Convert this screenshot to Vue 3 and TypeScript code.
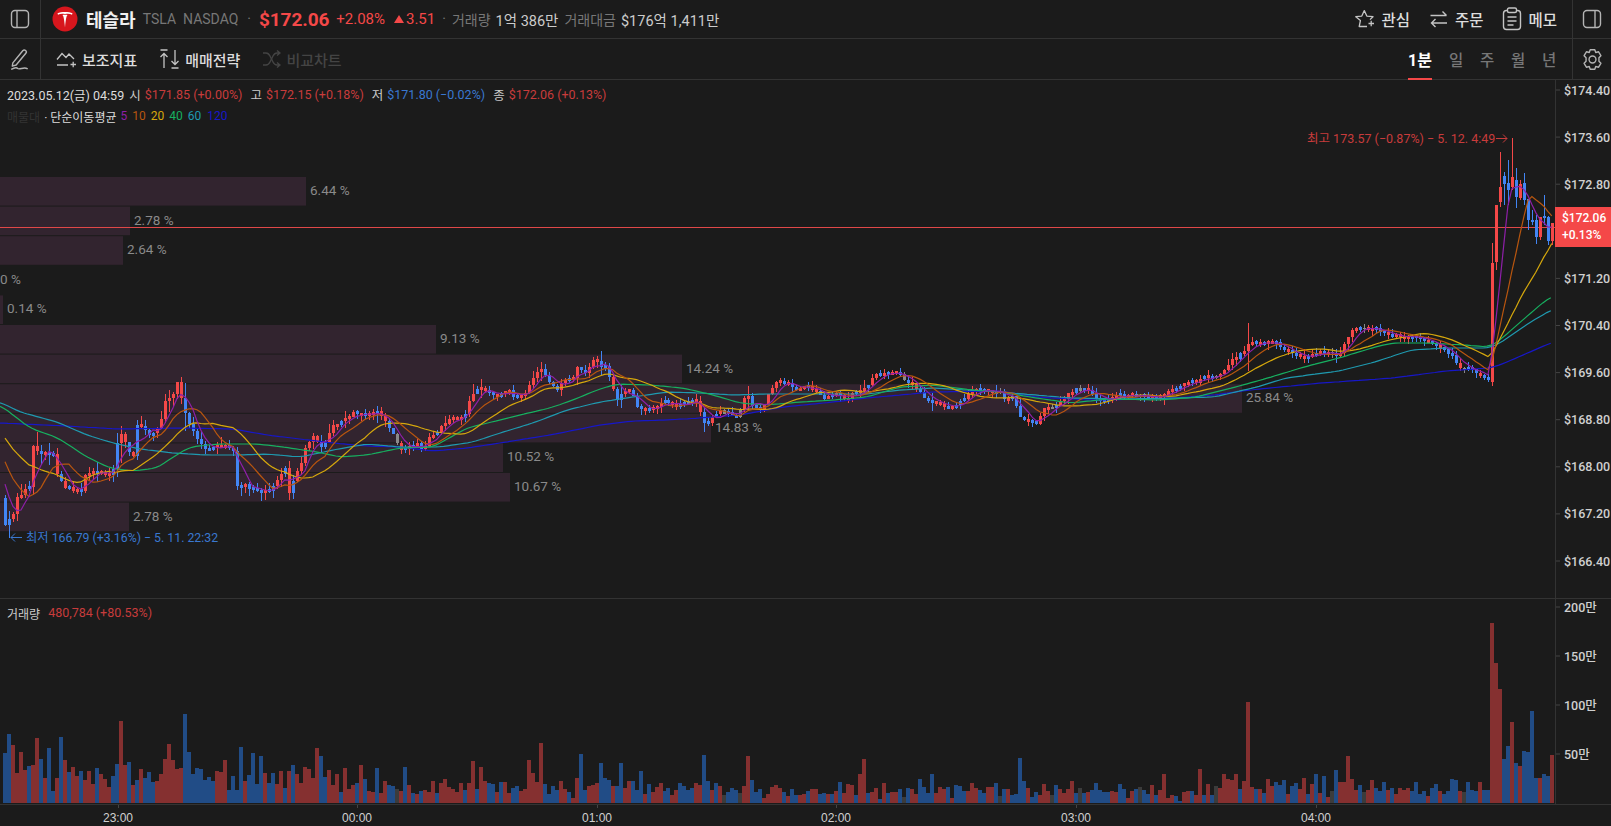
<script setup lang="ts">
import { computed } from 'vue'

type Pt = [number, number]

// 분봉 거래량: 방향(r/b/g) + 막대 높이(px)
const volumeRaw = `
b50 b69 r58 r30 r51 r33 b37 r38 r65 b44 r25 b55 b12 r25 b66 r43 b31 r36 r27 b32 r23 r32 r19 b35 r29 r24 r16 b27 b39 r82
r38 b41 r18 b23 r34 b25 b31 b21 r22 r29 r44 r59 r43 r34 r35 b89 b51 b29 b35 b34 b23 b26 b22 r32 r31 r43 b13 b27 b13 b56
r22 b28 b50 b19 b47 r30 b20 b30 r19 r32 b15 r32 b38 r29 r20 r36 r34 r25 r55 b47 b26 r33 r18 r29 b11 r35 r14 r18 b20 r38
b24 r12 r11 b35 r10 r22 b18 b17 g14 r12 b36 r18 b10 r9 b12 r13 r11 r22 b10 r20 r24 r16 r14 r11 r20 b13 r20 r42 b14 r36
r22 b20 b19 r11 b21 r21 r10 b15 b17 r12 r14 r43 r30 r21 r60
b19 b9 b17 b13 r22 r14 b11 r5 r25 b49 b13 r17 r18 r20 b40 b25 b23 r17 b17 b40 r15 r22 b22 b13 b32 r9 b19 r11 r16 r20
b12 b15 r8 r13 b20 b17 b13 b15 r20 r18 b48 b22 r13 b20 r17 g8 b11 b15 b13 g10 r17 r47 b23 b11 b14 r5 r9 r16 r18 r15
b11 r7 b14 b8 r8 r9 b12 r14 r14 b9 b10 r9 b9 r12 b21 r10 r19 r18 b8 r29 r44 b10 r11 r15 b4 r20 b10 r11 r11 b14 g6 b15
r14 r9 b24 b16 b10 b29 r10 r16 r14 b16 r5 b18 b17 b12 r12 r20 r15 b13 b10 r16 r16 b20 g7 b14 r14 b8 b9 b45 b22 r15 b6
b11 r8 r19 r12 g8 b18 r14 r10 r14 r22 b10
g15 b10 r11 b13 b20 b13 b11 b11 r12 r11 b19 b14 r5 r12 b14 g16 b13 b9 r18 b8 r13 r29 r5 r8 b7 b2 r11 r12 b12 r8 r34 b8
r19 b8 g17 r15 r29 r24 r23 r29 b14 r22 r101 r16 b14 r14 b10 r24 r17 b21 b18 b23 r9 b17 b20 r14 r25 b9 r19 b29 r10 b27
r6 g12 b33 r21 r21 r47 r24 r13 b18 g11 r13 r23 b15 b12 b21 r13 b15 r9 r15 r13 r15 b12 b21 b9 b12 r7 b15 b19 r12 b9 b12
b24 b23 r12 g11 b21 b13 b12 r21 b13 b13 r180 r140 r114 b44 b57 r81 b40 r37 b52 b51 b92 b25 r25 b29 b27 r48
`

const pitch = 3.997
const volumes = volumeRaw.trim().split(/\s+/).map(s => ({ dir: s[0], h: Number(s.slice(1)) }))
const count = volumes.length
const xOf = (k: number) => 1 + pitch * (k + 389 - count)

// 종가 궤적 (화면 좌표)
const closePath: Pt[] = [
  [-90, 398], [-40, 420], [-18, 445], [-4, 470], [0, 490], [5, 525], [13, 515], [17, 497], [24, 490], [30, 488], [33, 447], [37, 452],
  [45, 453], [53, 455], [57, 475], [65, 487], [73, 490], [81, 490], [85, 475], [93, 473], [110, 473], [113, 470], [117, 443],
  [122, 433], [126, 445], [133, 457], [137, 423], [142, 426], [150, 435], [160, 423], [165, 400], [170, 398], [177, 383],
  [182, 400], [186, 418], [193, 430], [200, 443], [207, 450], [217, 447], [225, 445], [230, 448], [234, 450], [237, 490],
  [242, 483], [250, 488], [257, 492], [270, 490], [278, 478], [285, 468], [289, 495], [293, 480], [302, 460], [305, 447],
  [313, 435], [322, 448], [333, 425], [338, 425], [345, 418], [353, 413], [362, 415], [377, 413], [385, 423], [390, 430],
  [402, 450], [407, 448], [417, 445], [422, 448], [430, 437], [433, 435], [442, 425], [450, 417], [462, 418], [466, 412],
  [470, 398], [477, 390], [482, 387], [490, 393], [498, 395], [508, 390], [513, 398], [525, 393], [530, 383], [537, 370],
  [542, 370], [550, 383], [553, 388], [558, 390], [562, 380], [572, 378], [577, 367], [585, 373], [590, 365], [594, 358],
  [598, 363], [605, 368], [610, 383], [617, 400], [623, 390], [630, 388], [637, 408], [645, 411], [653, 410], [663, 402],
  [677, 405], [683, 405], [698, 398], [702, 420], [709, 423], [717, 412], [727, 412], [738, 417], [742, 405], [747, 393],
  [753, 407], [762, 410], [770, 392], [777, 383], [788, 382], [797, 392], [808, 387], [817, 390], [822, 398], [833, 393],
  [840, 395], [847, 403], [852, 395], [860, 392], [868, 385], [877, 373], [883, 373], [897, 372], [908, 382], [913, 382],
  [920, 392], [928, 400], [940, 403], [950, 408], [955, 405], [973, 390], [1000, 393], [1005, 398], [1014, 398], [1020, 417],
  [1027, 423], [1036, 423], [1041, 415], [1045, 407], [1057, 407], [1061, 400], [1071, 392], [1077, 388], [1087, 392],
  [1093, 392], [1096, 398], [1104, 400], [1112, 398], [1118, 395], [1123, 397], [1132, 395], [1141, 397], [1145, 397],
  [1152, 398], [1161, 397], [1171, 390], [1184, 385], [1193, 382], [1205, 378], [1214, 377], [1223, 372], [1232, 360],
  [1243, 353], [1250, 343], [1261, 345], [1273, 342], [1282, 348], [1291, 353], [1302, 358], [1314, 353], [1323, 352],
  [1334, 353], [1339, 357], [1344, 345], [1352, 332], [1357, 325], [1364, 330], [1373, 328], [1382, 330], [1389, 335],
  [1404, 337], [1416, 338], [1425, 342], [1434, 345], [1443, 350], [1454, 358], [1461, 368], [1471, 370], [1480, 377],
  [1489, 380],
]

// 급등 구간은 값을 직접 지정 [open, close, high, low]
const spike: number[][] = [
  [382, 263, 243, 386], [262, 205, 205, 270], [202, 187, 152, 207], [176, 184, 172, 205], [183, 190, 160, 205],
  [187, 177, 138, 190], [180, 197, 168, 208], [198, 184, 180, 200], [183, 200, 173, 205], [199, 220, 199, 230],
  [220, 222, 210, 225], [220, 237, 215, 244], [237, 217, 217, 240], [216, 218, 195, 225], [217, 241, 216, 245],
  [241, 223, 223, 245],
]

const ma40: Pt[] = [
  [0, 405], [30, 428], [58, 438], [87, 457], [110, 468], [133, 471], [157, 468], [173, 457], [190, 447], [217, 444], [257, 444],
  [283, 447], [317, 452], [340, 457], [367, 455], [400, 448], [433, 447], [467, 428], [500, 420], [520, 415], [550, 408],
  [573, 400], [597, 390], [617, 384], [650, 385], [683, 388], [713, 395], [740, 403], [767, 405], [800, 402], [833, 400],
  [867, 397], [900, 387], [933, 385], [973, 390], [1000, 392], [1036, 398], [1071, 403], [1107, 399], [1161, 400], [1196, 397],
  [1232, 388], [1268, 378], [1304, 367], [1339, 358], [1375, 347], [1393, 343], [1429, 343], [1464, 345], [1489, 347],
  [1500, 340], [1525, 318], [1546, 300], [1553, 296],
]
const ma60: Pt[] = [
  [0, 402], [20, 412], [57, 422], [87, 435], [113, 443], [140, 449], [173, 453], [207, 455], [240, 455], [267, 454], [300, 457],
  [333, 450], [367, 444], [400, 447], [440, 447], [473, 442], [500, 433], [533, 423], [567, 410], [600, 402], [633, 397],
  [667, 392], [700, 393], [733, 395], [767, 394], [867, 394], [900, 390], [933, 388], [967, 390], [1000, 392], [1036, 395],
  [1071, 398], [1125, 399], [1179, 398], [1214, 397], [1257, 387], [1286, 378], [1339, 371], [1375, 362], [1411, 350],
  [1446, 348], [1489, 348], [1500, 343], [1529, 323], [1553, 309],
]
const ma120: Pt[] = [
  [0, 423], [67, 426], [117, 429], [183, 428], [233, 429], [267, 435], [300, 439], [333, 443], [367, 446], [400, 447], [433, 451],
  [467, 448], [500, 443], [550, 435], [600, 425], [633, 421], [667, 420], [700, 418], [740, 415], [783, 407], [833, 402],
  [867, 398], [900, 395], [933, 392], [1000, 391], [1036, 397], [1089, 400], [1161, 399], [1214, 395], [1250, 390], [1321, 383],
  [1393, 378], [1446, 371], [1489, 368], [1500, 365], [1553, 342],
]

function lerp(pts: Pt[], x: number) {
  if (x <= pts[0][0]) return pts[0][1]
  for (let i = 1; i < pts.length; i++) {
    if (x <= pts[i][0]) {
      const [x0, y0] = pts[i - 1]
      const [x1, y1] = pts[i]
      return y0 + ((y1 - y0) * (x - x0)) / (x1 - x0)
    }
  }
  return pts[pts.length - 1][1]
}

let seed = 20230512
function rand() {
  seed = (seed * 1664525 + 1013904223) % 4294967296
  return seed / 4294967296
}

const spikeStart = count - spike.length

const closes = new Map<number, number>()
for (let k = -130; k < count; k++) {
  if (k >= spikeStart) closes.set(k, spike[k - spikeStart][1])
  else closes.set(k, lerp(closePath, xOf(k)) + (rand() - 0.5) * 4)
}

const candles = volumes.map((v, k) => {
  if (k >= spikeStart) {
    const [o, c, h, l] = spike[k - spikeStart]
    return { x: Math.round(xOf(k)), top: Math.min(o, c), bottom: Math.max(o, c), h, l, dir: v.dir }
  }
  const c = closes.get(k) as number
  const o = closes.get(k - 1) as number
  let top = Math.min(o, c)
  let bottom = Math.max(o, c)
  const minBody = v.dir === 'g' ? 1 : 3
  if (bottom - top < minBody) {
    const pad = (minBody - (bottom - top)) / 2
    top -= pad
    bottom += pad
  }
  const reach = 2 + v.h * 0.22
  return { x: Math.round(xOf(k)), top, bottom, h: top - rand() * reach, l: bottom + rand() * reach, dir: v.dir }
})

function candlePath(dir: string) {
  return candles
    .filter(c => c.dir === dir)
    .map(c => {
      const wick = `M${c.x} ${c.h.toFixed(1)}h1V${c.l.toFixed(1)}h-1z`
      const body = `M${c.x - 1} ${c.top.toFixed(1)}h3V${c.bottom.toFixed(1)}h-3z`
      return wick + body
    })
    .join('')
}

function volumePath(dir: string) {
  return volumes
    .map((v, k) => ({ v, k }))
    .filter(({ v }) => v.dir === dir)
    .map(({ v, k }) => `M${Math.round(xOf(k)) - 2} ${803 - v.h}h4V803h-4z`)
    .join('')
}

function movingAverage(n: number) {
  return volumes
    .map((_, k) => {
      let sum = 0
      for (let i = 0; i < n; i++) sum += closes.get(k - i) as number
      return `${xOf(k).toFixed(1)},${(sum / n).toFixed(1)}`
    })
    .join(' ')
}

function smoothLine(pts: Pt[]) {
  const last = pts[pts.length - 1][0]
  const out: string[] = []
  for (let x = pts[0][0]; x <= last; x += pitch) {
    const y = (lerp(pts, x - 6) + lerp(pts, x - 3) + lerp(pts, x) + lerp(pts, x + 3) + lerp(pts, x + 6)) / 5
    out.push(`${x.toFixed(1)},${y.toFixed(1)}`)
  }
  return out.join(' ')
}

const maLines = computed(() => [
  { key: 'ma120', color: '#1717c8', points: smoothLine(ma120) },
  { key: 'ma60', color: '#1f9ab0', points: smoothLine(ma60) },
  { key: 'ma40', color: '#17b060', points: smoothLine(ma40) },
  { key: 'ma20', color: '#d6a80c', points: movingAverage(20) },
  { key: 'ma10', color: '#b8560f', points: movingAverage(10) },
  { key: 'ma5', color: '#8e1fa8', points: movingAverage(5) },
])

const profile = [
  { label: '6.44 %', width: 306 },
  { label: '2.78 %', width: 130 },
  { label: '2.64 %', width: 123 },
  { label: '0 %', width: 0 },
  { label: '0.14 %', width: 3 },
  { label: '9.13 %', width: 436 },
  { label: '14.24 %', width: 682 },
  { label: '25.84 %', width: 1242 },
  { label: '14.83 %', width: 711 },
  { label: '10.52 %', width: 503 },
  { label: '10.67 %', width: 510 },
  { label: '2.78 %', width: 129 },
].map((row, i) => ({ ...row, y: 177 + 29.6 * i, textY: 195 + 29.6 * i, textX: row.width ? row.width + 4 : 0 }))

const priceTicks = ['$174.40', '$173.60', '$172.80', '', '$171.20', '$170.40', '$169.60', '$168.80', '$168.00', '$167.20', '$166.40'].map(
  (label, i) => ({ label, y: 90 + 47.1 * i }),
)
const volumeTicks = [
  { label: '200만', y: 607 },
  { label: '150만', y: 656 },
  { label: '100만', y: 705 },
  { label: '50만', y: 754 },
]
const timeTicks = [
  { label: '23:00', x: 118 },
  { label: '00:00', x: 357 },
  { label: '01:00', x: 597 },
  { label: '02:00', x: 836 },
  { label: '03:00', x: 1076 },
  { label: '04:00', x: 1316 },
]
const periods = ['일', '주', '월', '년']
</script>

<template>
  <div class="screen">
    <header class="row top-row">
      <div class="side left">
        <svg class="ico" width="20" height="20" viewBox="0 0 20 20" fill="none" stroke="#b4b4b4" stroke-width="1.4">
          <rect x="1.5" y="1.5" width="17" height="17" rx="3.5" />
          <path d="M7 1.5v17" />
        </svg>
      </div>
      <div class="info">
        <svg class="logo" width="26" height="26" viewBox="0 0 26 26">
          <circle cx="13" cy="13" r="12.5" fill="#d7161d" />
          <path fill="#fff" d="M5.5 7.3C9 5.7 17 5.7 20.5 7.3L20 8.8C18.8 8.2 17.4 7.9 15.9 7.8 15 7.8 14.2 8 13 8 11.8 8 11 7.8 10.1 7.8 8.6 7.9 7.2 8.2 6 8.8Z" />
          <path fill="#fff" d="M10.3 9C11.4 8.6 14.6 8.6 15.7 9 14.6 9.6 14 11.5 13 21.5 12 11.5 11.4 9.6 10.3 9Z" />
        </svg>
        <span class="name">테슬라</span>
        <span class="ticker">TSLA</span>
        <span class="ticker market">NASDAQ</span>
        <span class="dot first-dot">·</span>
        <span class="price">$172.06</span>
        <span class="change">+2.08%</span>
        <span class="change delta"><i class="up"></i>3.51</span>
        <span class="dot second-dot">·</span>
        <span class="stat-label">거래량</span>
        <span class="stat-value">1억 386만</span>
        <span class="stat-label amount">거래대금</span>
        <span class="stat-value">$176억 1,411만</span>
      </div>
      <div class="actions">
        <button class="action">
          <svg width="21" height="21" viewBox="0 0 21 21" fill="none" stroke="#c4c4c4" stroke-width="1.3" stroke-linejoin="round">
            <path d="M13 17.5H5.2L6.4 11.6 1.8 7.7l6-.6L10.3 1.6l2.5 5.5 6.2.6-3 2.9" />
            <path d="M14.5 14.5h5.5M17.2 11.8v5.5" />
          </svg>
          관심
        </button>
        <button class="action">
          <svg width="20" height="20" viewBox="0 0 20 20" fill="none" stroke="#c4c4c4" stroke-width="1.4">
            <path d="M1.5 6.5h16M13.5 2.5l4 4M18 14H2.500M6.500 10l-4 4 4 4" />
          </svg>
          주문
        </button>
        <button class="action">
          <svg width="20" height="24" viewBox="0 0 20 24" fill="none" stroke="#c4c4c4" stroke-width="1.4">
            <rect x="1.500" y="3.500" width="17" height="19" rx="3" />
            <rect x="5.500" y="1" width="9" height="4.500" rx="1.500" fill="#1b1b1b" />
            <path d="M5.500 10h9M5.500 14h9M5.500 18h6" />
          </svg>
          메모
        </button>
      </div>
      <div class="side right">
        <svg class="ico" width="20" height="20" viewBox="0 0 20 20" fill="none" stroke="#b4b4b4" stroke-width="1.4">
          <rect x="1.500" y="1.500" width="17" height="17" rx="3.500" />
          <path d="M13 1.500v17" />
        </svg>
      </div>
    </header>

    <nav class="row tool-row">
      <div class="side left">
        <svg class="ico" width="22" height="22" viewBox="0 0 20 20" fill="none" stroke="#b4b4b4" stroke-width="1.3" stroke-linejoin="round">
          <path d="M3.500 13.500 12.500 2.500c.8-.9 1.800-.9 2.600-.2s.9 1.700.2 2.500L6.500 15.500 3 16.500z" />
          <path d="M2 19.500c3-1.800 5-2 6-.8 1 1 4-.6 6-.6 1.200 0 2 .2 3 .8" />
        </svg>
      </div>
      <div class="tools">
        <button class="tool">
          <svg width="21" height="18" viewBox="0 0 21 18" fill="none" stroke="#c4c4c4" stroke-width="1.3">
            <path d="M1 9.500 6 3.500l4 4 3-3.500 5 5" />
            <path d="M1 15h11M14.500 14.500h5.500M17.200 11.800v5.500" />
          </svg>
          보조지표
        </button>
        <button class="tool">
          <svg width="21" height="20" viewBox="0 0 21 20" fill="none" stroke="#c4c4c4" stroke-width="1.3">
            <path d="M1.500 1h7M5 19V4.500M1.500 8 5 4.500 8.500 8" />
            <path d="M12.500 19h7M16 1v14.500M12.500 12l3.500 3.500 3.500-3.500" />
          </svg>
          매매전략
        </button>
        <button class="tool dim">
          <svg width="19" height="18" viewBox="0 0 19 18" fill="none" stroke="#444" stroke-width="1.400">
            <path d="M1 3h3c2 0 3 1 4 3l3 6c1 2 2 3 4 3h3M15 12.500l3 2.500-3 2.500" />
            <path d="M1 15h3c2 0 3-1 4-3l3-6c1-2 2-3 4-3h3M15 .5 18 3l-3 2.500" />
          </svg>
          비교차트
        </button>
      </div>
      <div class="periods">
        <span class="period active">1분</span>
        <span v-for="p in periods" :key="p" class="period">{{ p }}</span>
      </div>
      <div class="side right">
        <svg class="ico" width="23" height="23" viewBox="0 0 20 20" fill="none" stroke="#b4b4b4" stroke-width="1.200" stroke-linejoin="round">
          <path d="M8 1.500h4l.8 2.400 2.500-.6 2 3.400L15.600 8.500v3l1.700 1.800-2 3.400-2.500-.6-.8 2.400H8l-.8-2.400-2.500.6-2-3.400 1.700-1.800v-3L2.700 6.700l2-3.400 2.500.6z" />
          <circle cx="10" cy="10" r="3" />
        </svg>
      </div>
    </nav>

    <section class="price-pane">
      <svg class="plot" width="1611" height="518" viewBox="0 80 1611 518">
        <g v-for="row in profile" :key="row.y">
          <rect v-if="row.width" x="0" :y="row.y" :width="row.width" height="28.600" fill="#32242f" />
          <text class="pct" :x="row.textX" :y="row.textY">{{ row.label }}</text>
        </g>
        <path d="M0 227.500H1555" stroke="#e04848" stroke-width="1" shape-rendering="crispEdges" />
        <path :d="candlePath('b')" fill="#4285f4" shape-rendering="crispEdges" />
        <path :d="candlePath('g')" fill="#8a8a8a" shape-rendering="crispEdges" />
        <path :d="candlePath('r')" fill="#f44848" shape-rendering="crispEdges" />
        <polyline v-for="m in maLines" :key="m.key" :points="m.points" :stroke="m.color" fill="none" stroke-width="1.200" />
        <text class="extreme high" x="1307" y="143">최고 173.57 (−0.87%) − 5. 12. 4:49</text>
        <path d="M1496 138.500h11M1503 134.500l4 4-4 4" fill="none" stroke="#c83c3c" stroke-width="1" />
        <path d="M22 537.500H11M15 533.500l-4 4 4 4" fill="none" stroke="#3a78d0" stroke-width="1" />
        <text class="extreme low" x="26" y="542">최저 166.79 (+3.16%) − 5. 11. 22:32</text>
        <path d="M1555.500 80V598" stroke="#333" />
        <g v-for="t in priceTicks" :key="t.y">
          <path :d="`M1556 ${t.y}h4`" stroke="#444" />
          <text class="axis-label" x="1564" :y="t.y + 4.500">{{ t.label }}</text>
        </g>
      </svg>
      <div class="legend">
        <div class="legend-line">
          <span class="stamp">2023.05.12(금) 04:59</span>
          <span class="ohlc">시</span><span class="up-text">$171.85 (+0.00%)</span>
          <span class="ohlc">고</span><span class="up-text">$172.15 (+0.18%)</span>
          <span class="ohlc">저</span><span class="down-text">$171.80 (−0.02%)</span>
          <span class="ohlc">종</span><span class="up-text">$172.06 (+0.13%)</span>
        </div>
        <div class="legend-line second">
          <span class="muted">매물대</span>
          <span class="ma-title">· 단순이동평균</span>
          <span class="ma5">5</span><span class="ma10">10</span><span class="ma20">20</span><span class="ma40">40</span><span class="ma60">60</span><span class="ma120">120</span>
        </div>
      </div>
      <div class="price-tag">$172.06<br />+0.13%</div>
    </section>

    <section class="volume-pane">
      <svg class="plot" width="1611" height="205" viewBox="0 599 1611 205">
        <path :d="volumePath('b')" fill="#214c86" shape-rendering="crispEdges" />
        <path :d="volumePath('r')" fill="#853030" shape-rendering="crispEdges" />
        <path :d="volumePath('g')" fill="#3c3c3c" shape-rendering="crispEdges" />
        <path d="M1555.500 599V804" stroke="#333" />
        <g v-for="t in volumeTicks" :key="t.y">
          <path :d="`M1556 ${t.y}h4`" stroke="#444" />
          <text class="axis-label" x="1564" :y="t.y + 4.500">{{ t.label }}</text>
        </g>
      </svg>
      <div class="volume-legend">
        <span class="volume-title">거래량</span>
        <span class="up-text">480,784 (+80.53%)</span>
      </div>
    </section>

    <footer class="time-axis">
      <svg width="1611" height="21" viewBox="0 805 1611 21">
        <g v-for="t in timeTicks" :key="t.x">
          <path :d="`M${t.x}.5 805v3`" stroke="#444" />
          <text class="time-label" :x="t.x" y="822">{{ t.label }}</text>
        </g>
      </svg>
    </footer>
  </div>
</template>

<style scoped>
.screen {
  width: 1611px;
  height: 826px;
  overflow: hidden;
  background: #1b1b1b;
  color: #ddd;
  font-family: Roboto, "Noto Sans CJK KR", sans-serif;
}

.row {
  display: flex;
  align-items: stretch;
  border-bottom: 1px solid #333;
}
.top-row { height: 38px; }
.tool-row { height: 40px; }

.side {
  width: 40px;
  flex-shrink: 0;
  display: flex;
  align-items: center;
  justify-content: center;
}
.side.left { border-right: 1px solid #333; }
.side.right { border-left: 1px solid #333; width: 38px; }

.info {
  flex: 1;
  display: flex;
  align-items: center;
  padding-left: 11px;
  white-space: nowrap;
}
.logo { margin-right: 8px; }
.name { font-size: 18px; font-weight: 700; color: #f0f0f0; margin-right: 7px; }
.ticker { font-size: 14px; color: #777; }
.market { margin-left: 7px; }
.dot { color: #777; font-size: 14px; }
.first-dot { margin: 0 8px 0 9px; }
.price { font-size: 19px; font-weight: 700; color: #f44848; letter-spacing: -0.1px; }
.change { font-size: 15px; color: #f44848; margin-left: 7px; }
.delta { margin-left: 9px; display: inline-flex; align-items: center; }
.up {
  width: 0;
  height: 0;
  margin-right: 2px;
  border-left: 5px solid transparent;
  border-right: 5px solid transparent;
  border-bottom: 8px solid #f44848;
}
.second-dot { margin: 0 6px 0 7px; }
.stat-label { font-size: 14px; color: #777; margin-right: 5px; }
.stat-label.amount { margin-left: 6px; }
.stat-value { font-size: 14.500px; color: #ccc; }

.actions {
  display: flex;
  align-items: center;
  gap: 19px;
  padding-right: 15px;
}
.action,
.tool {
  display: flex;
  align-items: center;
  gap: 6px;
  padding: 0;
  border: 0;
  background: none;
  color: #ddd;
  font: 500 15.500px Roboto, "Noto Sans CJK KR", sans-serif;
}
.tool { font-size: 15px; gap: 5px; }

.tools {
  flex: 1;
  display: flex;
  align-items: center;
  gap: 22px;
  padding-left: 15px;
}
.tool.dim { color: #444; }

.periods {
  display: flex;
  align-items: stretch;
  padding-right: 16px;
}
.period {
  display: flex;
  align-items: center;
  justify-content: center;
  width: 14px;
  margin-left: 17px;
  font-size: 15.500px;
  font-weight: 500;
  color: #777;
}
.period.active {
  width: 24px;
  margin-left: 0;
  color: #fff;
  font-size: 16px;
  font-weight: 700;
  margin-bottom: -1px;
  border-bottom: 2px solid #f44848;
}

.price-pane {
  position: relative;
  height: 518px;
  border-bottom: 1px solid #333;
}
.volume-pane {
  position: relative;
  height: 205px;
  border-bottom: 1px solid #333;
}
.plot { display: block; }

.pct { font-size: 13.500px; fill: #8a8a8a; }
.extreme { font-size: 12.500px; }
.extreme.high { fill: #c83c3c; }
.extreme.low { fill: #3a78d0; font-size: 12.300px; }
.axis-label { font-size: 12.500px; font-weight: 500; fill: #d0d0d0; }
.time-label { font-size: 12px; fill: #d0d0d0; text-anchor: middle; font-family: "Liberation Sans", sans-serif; }

.legend {
  position: absolute;
  left: 7px;
  top: 5px;
  font-size: 12.500px;
  white-space: nowrap;
}
.legend-line { display: flex; align-items: center; height: 18px; }
.legend-line.second { margin-top: 4px; font-size: 12px; }
.stamp { color: #ddd; margin-right: 5px; }
.ohlc { color: #ccc; margin-right: 4px; }
.up-text { color: #c83c3c; margin-right: 8px; }
.down-text { color: #3a78d0; margin-right: 8px; }
.muted { color: #333; margin-right: 4px; }
.ma-title { color: #ddd; margin-right: 4px; }
.ma5 { color: #8e1fa8; margin-right: 5px; }
.ma10 { color: #b8560f; margin-right: 5px; }
.ma20 { color: #d6a80c; margin-right: 5px; }
.ma40 { color: #17b060; margin-right: 5px; }
.ma60 { color: #1f9ab0; margin-right: 6px; }
.ma120 { color: #1717c8; }

.price-tag {
  position: absolute;
  right: 0;
  top: 127px;
  width: 49px;
  height: 40px;
  padding-left: 7px;
  background: #f44848;
  color: #fff;
  font-size: 12px;
  font-weight: 500;
  line-height: 17px;
  display: flex;
  align-items: center;
}

.volume-legend {
  position: absolute;
  left: 7px;
  top: 6px;
  display: flex;
  gap: 8px;
  font-size: 12.500px;
  white-space: nowrap;
}
.volume-title { color: #ccc; font-size: 12px; }

.time-axis svg { display: block; }
</style>
